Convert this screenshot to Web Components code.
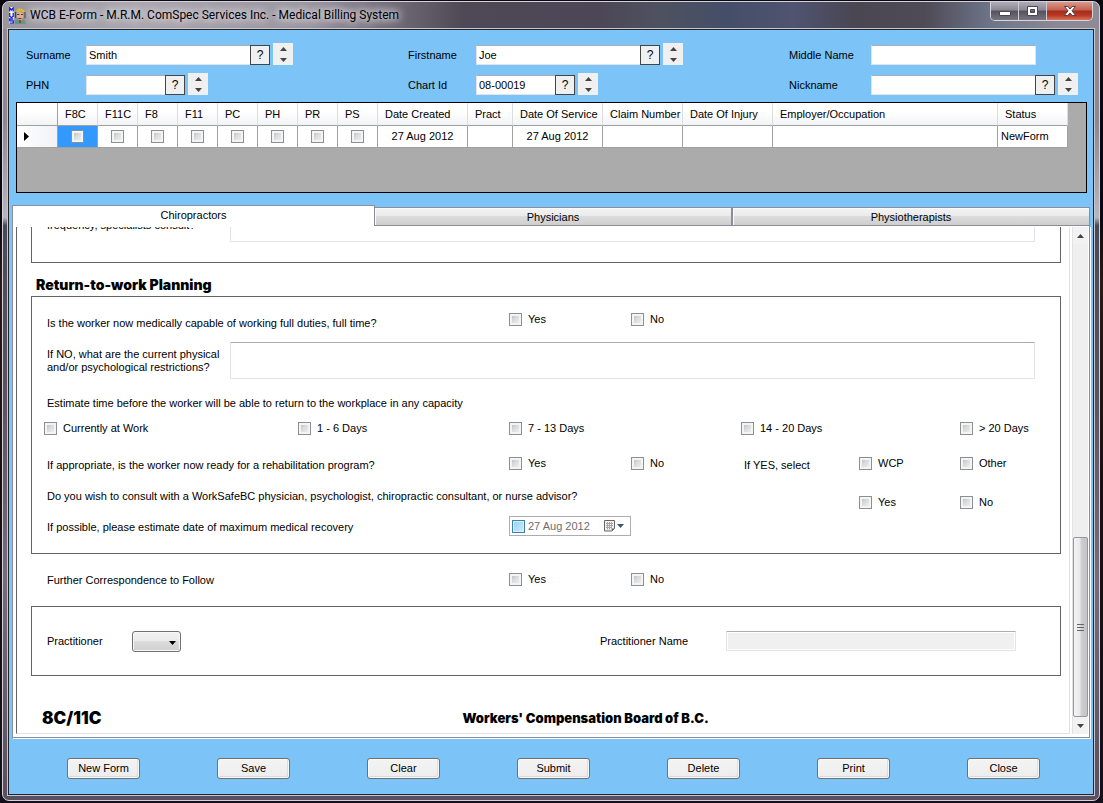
<!DOCTYPE html>
<html lang="en">
<head>
<meta charset="utf-8">
<title>WCB E-Form</title>
<style>
body{margin:0;height:100vh;overflow:hidden;font:11px/13px "Liberation Sans",Arial,sans-serif;color:#000;background:#0a0812}
</style>
</head>
<body>
<app-window>
  <title-bar slot="title">WCB E-Form - M.R.M. ComSpec Services Inc. - Medical Billing System</title-bar>
  <patient-search></patient-search>
  <form-grid></form-grid>
  <tab-strip></tab-strip>
  <form-panel><return-form></return-form></form-panel>
  <action-bar></action-bar>
</app-window>

<script>
class Base extends HTMLElement {
  connectedCallback() {
    if (this.shadowRoot) return;
    const t = document.createElement('template');
    t.innerHTML = '<style>:host,*{box-sizing:border-box}input,button,select,textarea{font:inherit;color:inherit;margin:0;border-radius:0}</style>' + this.view();
    this.attachShadow({mode: 'open'}).append(t.content.cloneNode(true));
  }
}

/* Glass frame around the client area */
customElements.define('app-window', class extends Base {
  view() { return `<style>
    :host{display:block;height:100vh;padding:1px 3px 2px 2px;background:linear-gradient(#0a0812 0 27%,#2a1a18 35%,#1a1014 60%,#15101c)}
    .frame{height:100%;display:flex;flex-direction:column;padding:0 4px 4px;border:1px solid #d6d2da;border-radius:7px;
      background:linear-gradient(90deg,#9a969e 0,#aaa6ae 12%,#9a96a0 28%,#6a6470 37%,#4f4856 42%,#4c4656 54%,#4e5260 60%,#454e68 66%,#4f5470 72%,#4a4652 78%,#4e4a56 84%,#6c7488 90%,#8a8894 96%,#8f8b95) 0 0/100% 27px no-repeat,
      linear-gradient(#8f8b95 0,#8d8790 15%,#b9b5bf 27%,#4a4a56 28%,#5c5460 50%,#776c7a 72%,#58505e 100%)}
    .edge{flex:1;min-height:0;border:1px solid #c9c5cf}
    main{height:100%;display:flex;flex-direction:column;border:1px solid #23232b;background:#7cc3f8}
  </style>
  <div class="frame"><slot name="title"></slot><div class="edge"><main><slot></slot></main></div></div>`; }
});

customElements.define('title-bar', class extends Base {
  view() { return `<style>
    :host{display:flex;align-items:flex-start;height:26px;flex:none;font:12px/26px Roboto,"Open Sans",sans-serif}
    svg{display:block}
    .icon{margin:5px 4px 0 2px}
    h1{font:inherit;margin:0;flex:1;white-space:nowrap;text-shadow:0 0 6px #dcd8e0,0 0 8px #dcd8e0,0 0 10px #dcd8e0}
    nav{display:flex;margin-right:2px;border:1px solid #d9d5dd;border-top:0;border-radius:0 0 5px 5px;overflow:hidden}
    button{border:0;padding:0;height:18px;width:28px;display:grid;place-items:center;background:linear-gradient(#b0adb8 0,#8a8793 45%,#55525f 50%,#77747f 100%);border-right:1px solid #d0ccd6}
    .close{width:45px;border:0;background:linear-gradient(#d99a8c 0,#c3614f 45%,#a52a18 50%,#b93a26 75%,#d4755c 100%)}
  </style>
  <svg class="icon" width="17" height="18" viewBox="0 0 17 18">
    <path fill="#fff" d="M0 0h5v17H0z"/>
    <path fill="none" stroke="#1420e0" stroke-width="1.300" d="M.7 4.500V.8L2.400 3 4.200.8v3.700M.7 5.800v3.500l1.800 1.200 1.700-1.200V5.800M4.300 12H.7v1.800h3.600v2.400H.5"/>
    <path fill="#8a8f95" d="M6 6 8 2l5-1 3 3 .5 7-2 5H8z"/>
    <path fill="#dcb83a" d="M7 4 9 1.500h4L16 4l-1 1.500-4-1-3 1z"/>
    <path fill="#e3b08f" d="M8 6l3-1 3 1 .5 4-2 3h-2L8 10z"/>
    <path fill="#4a3a36" d="M8 7h2.500v1H8zM12 7h2v1h-2zM9.500 11h3v1h-3zM6 5h1v6H6zM15.500 5h1v6h-1z"/>
    <path fill="#5b9a86" d="M6 13l3 0 2 2 3-2 2.500 1v3H6z"/>
    <path fill="#b03a30" d="M10 13h2v3h-2z"/>
  </svg>
  <h1><slot></slot></h1>
  <nav>
    <button aria-label="Minimize"><svg width="14" height="12"><path d="M1.500 6.500h11v4h-11z" fill="#fff" stroke="#4a4753"/></svg></button>
    <button aria-label="Maximize"><svg width="13" height="12"><path fill="#fff" fill-rule="evenodd" stroke="#4a4753" d="M1.500 1.500h10v9h-10zM4.500 4.500v3h4v-3z"/></svg></button>
    <button class="close" aria-label="Close window"><svg width="14" height="12"><path d="M1.500 1.500h3.300L7 4l2.200-2.500h3.300L9 5.800l3.700 4.700H9.200L7 8l-2.200 2.500H1.300L5 5.800z" fill="#fff" stroke="#5c3a3a"/></svg></button>
  </nav>`; }
});

/* One labelled text box, with optional lookup button and spinner */
customElements.define('search-field', class extends Base {
  view() {
    const label = this.getAttribute('label'), value = this.getAttribute('value') || '';
    return `<style>
    :host{display:flex;align-items:flex-end;height:22px}
    label{width:var(--label);flex:none;white-space:nowrap;line-height:20px}
    input{width:165px;height:20px;padding:0 2px;border:1px solid #e2e3ea;border-top-color:#abadb3;background:#fff;outline:0}
    :host([short]) input{width:80px}
    .ask{width:20px;height:20px;margin-left:-1px;padding:0;border:1px solid #444;background:#f0f0f0;line-height:16px;font-size:12px}
    .spin{display:flex;flex-direction:column;width:20px;height:22px;margin-left:3px;background:#f0f0f0}
    .spin button{flex:1;border:0;padding:0;background:none;display:grid;place-items:center}
    svg{display:block}
  </style>
  <label for="f">${label}</label><input id="f" value="${value}">
  ${this.hasAttribute('lookup') ? `<button class="ask" aria-label="Look up ${label}">?</button>
  <div class="spin"><button aria-label="Previous"><svg width="7" height="4"><path d="M0 4 3.500 0 7 4z" fill="#444"/></svg></button><button aria-label="Next"><svg width="7" height="4"><path d="M0 0 3.500 4 7 0z" fill="#444"/></svg></button></div>` : ''}`;
  }
});

customElements.define('patient-search', class extends Base {
  view() { return `<style>
    :host{display:grid;flex:none;grid-template-columns:382fr 381fr 290fr;row-gap:8px;padding:13px 14px 7px 17px}
    .a{--label:60px}.b{--label:68px}.c{--label:82px}
  </style>
  <search-field class="a" label="Surname" value="Smith" lookup></search-field>
  <search-field class="b" label="Firstname" value="Joe" lookup></search-field>
  <search-field class="c" label="Middle Name"></search-field>
  <search-field class="a" label="PHN" short lookup></search-field>
  <search-field class="b" label="Chart Id" value="08-00019" short lookup></search-field>
  <search-field class="c" label="Nickname" lookup></search-field>`; }
});

const CHECK = `input[type=checkbox]{appearance:none;flex:none;width:13px;height:13px;border:1px solid #8e8f8f;
  background:linear-gradient(135deg,#aeb4bd,#d9dbde 45%,#f6f6f6);box-shadow:inset 0 0 0 2px #f4f4f4;outline:0}
  input[type=checkbox]:checked{background:#2a4d8f}`;

customElements.define('form-grid', class extends Base {
  view() {
    const flags = ['F8C', 'F11C', 'F8', 'F11', 'PC', 'PH', 'PR', 'PS'];
    return `<style>${CHECK}
    :host{display:block;flex:none;height:91px;margin:0 6px 0 7px;border:1px solid #000;background:#ababab}
    table{width:calc(100% - 18px);table-layout:fixed;border-collapse:separate;border-spacing:0;background:#fff}
    th{height:23px;padding:0 0 0 7px;text-align:left;font-weight:400;white-space:nowrap;border-right:1px solid #dcdde0;border-bottom:1px solid #a0a0a0;background:linear-gradient(#fff,#fff 40%,#f2f3f5)}
    td{height:22px;padding:0;text-align:center;white-space:nowrap;border-right:1px solid #a0a0a0;border-bottom:1px solid #a0a0a0}
    th:first-child,td:first-child{border-right-color:#a0a0a0;padding:0}
    td:first-child{background:linear-gradient(90deg,#fff,#f1f2f4)}
    td:first-child svg{display:block;margin-left:7px}
    td.on{background:#3399ff} td.left{text-align:left;padding-left:3px}
    input{display:block;margin:0 auto}
    .h{width:40px}
  </style>
  <table><colgroup><col style="width:41px">${'<col class="h">'.repeat(8)}<col style="width:90px"><col style="width:45px"><col style="width:90px"><col style="width:80px"><col style="width:90px"><col><col style="width:70px"></colgroup>
  <thead><tr><th></th>${[...flags, 'Date Created', 'Pract', 'Date Of Service', 'Claim Number', 'Date Of Injury', 'Employer/Occupation', 'Status'].map(t => `<th>${t}</th>`).join('')}</tr></thead>
  <tbody><tr><td><svg width="5" height="9"><path d="M0 0 5 4.500 0 9z"/></svg></td>${flags.map((f, i) => `<td${i ? '' : ' class="on"'}><input type="checkbox" aria-label="${f}"></td>`).join('')}
  <td>27 Aug 2012</td><td></td><td>27 Aug 2012</td><td></td><td></td><td></td><td class="left">NewForm</td></tr></tbody></table>`;
  }
});

customElements.define('tab-strip', class extends Base {
  view() { return `<style>
    :host{display:flex;flex:none;align-items:flex-end;height:21px;margin:12px 3px 0}
    button{flex:358;height:19px;padding:1px 0 0;border:1px solid #8c8c9b;background:linear-gradient(#f4f4f4,#ebebeb 45%,#dcdcdc 50%,#cfcfcf)}
    button+button{box-shadow:inset 1px 1px #fafafa}
    .on{flex:363;height:21px;border-bottom:0;background:#fff;padding:0 0 2px}
    .on+button{border-left:0}
  </style>
  <button class="on" role="tab" aria-selected="true">Chiropractors</button><button role="tab">Physicians</button><button role="tab">Physiotherapists</button>`; }
});

customElements.define('form-panel', class extends Base {
  view() { return `<style>
    :host{display:flex;flex:1;min-height:0;margin:0 3px;padding:1px 1px 3px 3px;border:1px solid #8c8c9b;border-top:0;background:#fff;box-shadow:1px 1px #fff}
    .view{flex:1;min-width:0;display:flex;flex-direction:column;justify-content:flex-end;overflow:hidden;border:1px solid #e3e3e3;border-top:0;border-left-color:#646464;margin-right:2px}
    .bar{width:16px;display:flex;flex-direction:column;background:#efefef;border-left:1px solid #e3e3e3}
    .bar button{height:17px;border:0;padding:0;background:#f2f2f2;display:grid;place-items:center}
    .track{flex:1;display:flex;flex-direction:column;justify-content:flex-end}
    .thumb{height:38%;display:grid;place-items:center;border:1px solid #979797;border-radius:2px;background:linear-gradient(90deg,#f5f5f5,#e9e9eb 45%,#cfcfd2 55%,#c3c3c6)}
    svg{display:block}
  </style>
  <div class="view"><slot></slot></div>
  <div class="bar"><button aria-label="Scroll up"><svg width="7" height="4"><path d="M0 4 3.500 0 7 4z" fill="#444"/></svg></button>
  <div class="track"><div class="thumb"><svg width="7" height="9"><path d="M0 1.500h7M0 4.500h7M0 7.500h7" stroke="#666"/></svg></div></div>
  <button aria-label="Scroll down"><svg width="7" height="4"><path d="M0 0 3.500 4 7 0z" fill="#444"/></svg></button></div>`; }
});

customElements.define('check-option', class extends Base {
  view() { return `<style>${CHECK}
    :host{display:block}
    label{display:flex;align-items:center;gap:6px;white-space:nowrap;height:13px}
  </style><label><input type="checkbox"><slot></slot></label>`; }
});

customElements.define('date-box', class extends Base {
  view() { return `<style>${CHECK}
    :host{display:flex;align-items:center;height:20px;border:1px solid #abadb3;padding-left:2px;background:#fff;color:#6d6d6d}
    input[type=checkbox]{border-color:#3f7fa8;background:linear-gradient(135deg,#8fd0f4,#d3effd);box-shadow:inset 0 0 0 1px #d8f0fc}
    input[type=text]{flex:1;min-width:0;border:0;padding:0 0 0 3px;background:none;outline:0}
    button{flex:none;border:0;padding:0;width:27px;height:16px;background:none}
    svg{display:block}
  </style>
  <input type="checkbox" aria-label="Use date"><input type="text" aria-label="Estimated date of maximum medical recovery" value="27 Aug 2012">
  <button aria-label="Open calendar"><svg width="22" height="14"><path d="M1.500 1.500h10v8l-2.500 2.500H1.500z" fill="#f4f1f1" stroke="#6a6264"/><path d="M3 4.500h7M3 6.500h7M3 8.500h6M4.500 3v7.500M6.500 3v7.500M8.500 3v7.500" stroke="#a9a5ad"/><path d="M9 12V9.500h2.500z" fill="#6a6264"/><path d="M14 5h7l-3.500 4z" fill="#3b5577"/></svg></button>`; }
});

customElements.define('return-form', class extends Base {
  view() { return `<style>
    :host{display:block;flex:none;padding:0 8px 0 14px;--cols:minmax(0,254fr) minmax(0,211fr) minmax(0,122fr) minmax(0,110fr) minmax(0,118fr) minmax(0,101fr) minmax(0,90fr)}
    section{border:1px solid #646464;padding:0 10px 17px 12px}
    section.prior{border-top:0;padding-bottom:20px}
    .prior label{padding-top:4px}
    h2,.end{font-family:Inter,"Liberation Sans",sans-serif;font-weight:900}
    h2{margin:0;padding:13px 5px 2px;font-size:14px;line-height:18px}
    .row{display:grid;grid-template-columns:var(--cols);align-items:start;margin-top:12px}
    .row.far{margin-top:18px}.row.near{margin-top:7px}.row.first{margin-top:16px}.row.wide{margin-top:22px}
    .q{padding-left:3px;grid-column:1/3;white-space:nowrap}
    .drop{padding-top:2px}
    .c3{grid-column:3}.c5{grid-column:5}.c6{grid-column:6}.c7{grid-column:7}
    .second{margin-top:6px}
    .text{display:grid;grid-template-columns:186fr 805fr 15fr;align-items:center}
    .text label{padding-left:3px}
    textarea,.name{display:block;width:100%;border:1px solid #e2e3ea;border-top-color:#abadb3;border-radius:1px;outline:0;resize:none}
    textarea{height:37px}
    .follow{padding:0 11px 0 13px;margin:19px 0}
    .pract{display:grid;grid-template-columns:85fr 468fr 126fr 290fr 44fr;align-items:center;height:70px;padding:0 0 0 15px}
    select{appearance:none;display:block;width:49px;height:21px;border:1px solid #707070;border-radius:3px;outline:0;
      background:url('data:image/svg+xml,<svg xmlns="http://www.w3.org/2000/svg" width="7" height="4"><path d="M0 0h7L3.500 4z"/></svg>') right 4px top 9px no-repeat,linear-gradient(#f2f2f2,#ebebeb 48%,#dcdcdc 50%,#cfcfcf);box-shadow:inset 0 0 0 1px #f8f8f8}
    .name{height:20px;background:#f0f0f0;box-shadow:inset 0 0 0 1px #fff}
    .end{display:grid;grid-template-columns:420fr 598fr;align-items:center;padding:32px 0 5px 11px;line-height:20px;font-size:13px}
    .end b{font-size:17px;font-weight:900}
  </style>
  <section class="prior"><div class="text"><label for="p">frequency, specialists consult?</label><textarea id="p"></textarea></div></section>
  <h2>Return-to-work Planning</h2>
  <section>
    <div class="row first"><span class="q" style="padding-top:4px">Is the worker now medically capable of working full duties, full time?</span><check-option class="c3">Yes</check-option><check-option>No</check-option></div>
    <div class="row" style="display:block"><div class="text"><label for="r">If NO, what are the current physical<br>and/or psychological restrictions?</label><textarea id="r"></textarea></div></div>
    <div class="row far"><span class="q">Estimate time before the worker will be able to return to the workplace in any capacity</span></div>
    <div class="row"><check-option>Currently at Work</check-option><check-option>1 - 6 Days</check-option><check-option>7 - 13 Days</check-option><check-option class="c5">14 - 20 Days</check-option><check-option class="c7">&gt; 20 Days</check-option></div>
    <div class="row wide"><span class="q drop">If appropriate, is the worker now ready for a rehabilitation program?</span><check-option class="c3">Yes</check-option><check-option>No</check-option><span class="q drop c5">If YES, select</span><check-option>WCP</check-option><check-option>Other</check-option></div>
    <div class="row far"><span class="q">Do you wish to consult with a WorkSafeBC physician, psychologist, chiropractic consultant, or nurse advisor?</span><check-option class="c6 second">Yes</check-option><check-option class="second">No</check-option></div>
    <div class="row near" style="align-items:center"><span class="q drop">If possible, please estimate date of maximum medical recovery</span><date-box class="c3"></date-box></div>
  </section>
  <div class="row follow"><span class="q" style="padding-top:1px">Further Correspondence to Follow</span><check-option class="c3">Yes</check-option><check-option>No</check-option></div>
  <section class="pract"><label for="s">Practitioner</label><select id="s"><option></option></select><label for="n">Practitioner Name</label><input class="name" id="n" readonly></section>
  <div class="end"><b>8C/11C</b><span>Workers' Compensation Board of B.C.</span></div>`; }
});

customElements.define('action-bar', class extends Base {
  view() { return `<style>
    :host{display:flex;flex:none;justify-content:space-between;padding:20px 53px 15px 58px}
    button{width:73px;height:21px;padding:0;border:1px solid #707070;border-radius:3px;background:linear-gradient(#f3f3f3,#ededed);box-shadow:inset 0 0 0 1px #fafafa,inset -2px -2px #dcdcdc}
  </style>${['New Form', 'Save', 'Clear', 'Submit', 'Delete', 'Print', 'Close'].map(t => `<button>${t}</button>`).join('')}`; }
});
</script>
</body>
</html>
